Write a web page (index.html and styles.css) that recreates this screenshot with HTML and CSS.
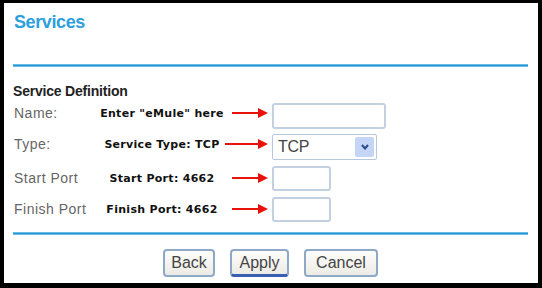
FILE: index.html
```html
<!DOCTYPE html>
<html lang="en">
  <head>
    <meta charset="UTF-8" />
    <title>Services</title>
    <link rel="stylesheet" href="styles.css">
  </head>
  <body>
    <div class="frame">
      <h1 class="title">Services</h1>
      <div class="rule"></div>

      <h2 class="section">Service Definition</h2>
      <div class="fields">
        <div class="row lift">
          <span class="label">Name:</span>
          <span class="note">Enter "eMule" here</span>
          <svg class="arrow" width="36" height="10" viewBox="0 0 36 10"><line x1="0" y1="5" x2="27" y2="5" /><polygon points="26,0 36,5 26,10" /></svg>
          <input class="box wide" type="text" name="name" />
        </div>
        <div class="row lift">
          <span class="label">Type:</span>
          <span class="note">Service Type: TCP</span>
          <svg class="arrow long" width="43" height="10" viewBox="0 0 43 10"><line x1="0" y1="5" x2="34" y2="5" /><polygon points="33,0 43,5 33,10" /></svg>
          <div class="select">
            <span class="value">TCP</span>
            <span class="drop"><svg width="8" height="6" viewBox="0 0 8 6"><path d="M1 1 L4 4.5 L7 1" /></svg></span>
          </div>
        </div>
        <div class="row">
          <span class="label">Start Port</span>
          <span class="note">Start Port: 4662</span>
          <svg class="arrow" width="36" height="10" viewBox="0 0 36 10"><line x1="0" y1="5" x2="27" y2="5" /><polygon points="26,0 36,5 26,10" /></svg>
          <input class="box short" type="text" name="start_port" />
        </div>
        <div class="row">
          <span class="label">Finish Port</span>
          <span class="note">Finish Port: 4662</span>
          <svg class="arrow" width="36" height="10" viewBox="0 0 36 10"><line x1="0" y1="5" x2="27" y2="5" /><polygon points="26,0 36,5 26,10" /></svg>
          <input class="box short" type="text" name="finish_port" />
        </div>
      </div>

      <div class="rule"></div>
      <div class="buttons">
        <button class="btn back">Back</button>
        <button class="btn apply">Apply</button>
        <button class="btn cancel">Cancel</button>
      </div>
    </div>
  </body>
</html>
```

FILE: styles.css
```css
body {
  margin: 0;
  background: #000;
  font-family: "Liberation Sans", Arial, sans-serif;
}

.frame {
  box-sizing: border-box;
  height: 288px;
  background: #fff;
  border-style: solid;
  border-color: #000;
  border-width: 3px 4px 5px 4px;
  padding: 8px 10px 0 9px;
}

.title {
  margin: 0 0 0 1px;
  font-size: 18px;
  line-height: 22px;
  letter-spacing: -0.4px;
  color: #2d9fdc;
}

.rule {
  height: 3px;
  margin-top: 31px;
  background: linear-gradient(#9fd4f0, #2098d8 40%, #2098d8 60%, #a8d8f2);
}

.section {
  margin: 16px 0 0 0;
  font-size: 14px;
  line-height: 16px;
  letter-spacing: -0.2px;
  color: #222;
}

.fields {
  margin-top: 4px;
  display: flex;
  flex-direction: column;
  gap: 5px;
}

.row {
  display: grid;
  grid-template-columns: 88px 122px 49px 1fr;
  align-items: center;
  height: 26px;
}
.row.lift .label,
.row.lift .note,
.row.lift .arrow {
  margin-bottom: 6px;
}

.label {
  padding-left: 1px;
  font-size: 14px;
  letter-spacing: 0.5px;
  white-space: nowrap;
  color: #666;
}

.note {
  justify-self: center;
  white-space: nowrap;
  font-family: "DejaVu Sans", sans-serif;
  font-weight: bold;
  font-size: 11px;
  letter-spacing: 0.3px;
  color: #111;
}

.arrow {
  justify-self: end;
  margin-right: 4px;
}
.arrow line {
  stroke: #e8120c;
  stroke-width: 2;
}
.arrow polygon {
  fill: #e8120c;
}

.box {
  box-sizing: border-box;
  height: 26px;
  margin: 0;
  border: 2px solid #c3d0e0;
  border-radius: 3px;
  background: #fff;
}
.box.wide {
  width: 114px;
}
.box.short {
  width: 59px;
  height: 25px;
}

.select {
  box-sizing: border-box;
  display: flex;
  align-items: center;
  justify-content: space-between;
  width: 105px;
  height: 26px;
  padding: 2px;
  border: 1px solid #b8c8dc;
  border-radius: 2px;
}
.select .value {
  padding-left: 3px;
  font-size: 16px;
  letter-spacing: -0.3px;
  color: #444;
}
.select .drop {
  display: flex;
  align-items: center;
  justify-content: center;
  width: 19px;
  height: 20px;
  background: #c4d5f6;
  border-radius: 2px;
}
.select .drop path {
  fill: none;
  stroke: #2b4a8e;
  stroke-width: 2;
}

.buttons {
  display: flex;
  justify-content: center;
  gap: 15px;
  margin-top: 14px;
}

.fields + .rule {
  margin-top: 10px;
}

.btn {
  box-sizing: border-box;
  height: 28px;
  padding: 0;
  font: inherit;
  font-size: 16px;
  color: #444;
  background: linear-gradient(#fdfdfb, #ecebe5);
  border: 2px solid #8ea8c8;
  border-radius: 4px;
}
.btn.back {
  width: 52px;
}
.btn.apply {
  width: 59px;
  border-bottom: 3px solid #3a5fb0;
}
.btn.cancel {
  width: 74px;
}
```
